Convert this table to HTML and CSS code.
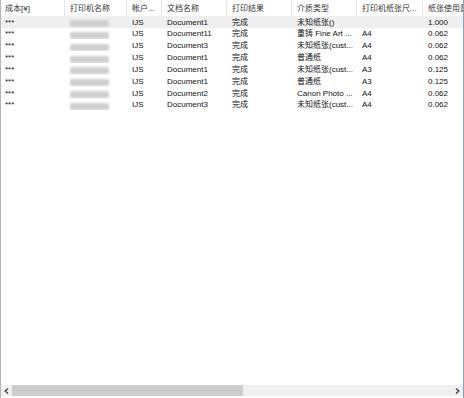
FILE: index.html
```html
<!DOCTYPE html>
<html lang="zh-CN">
<head>
<meta charset="utf-8">
<link rel="stylesheet" href="styles.css">
</head>
<body>
<div class="frame">
  <div class="table">
    <div class="row head">
      <div class="cell">成本[¥]</div>
      <div class="cell">打印机名称</div>
      <div class="cell">帐户...</div>
      <div class="cell">文档名称</div>
      <div class="cell">打印结果</div>
      <div class="cell">介质类型</div>
      <div class="cell">打印机纸张尺...</div>
      <div class="cell last">纸张使用量</div>
    </div>
    <div class="row sel">
      <div class="cell">***</div><div class="cell"><span class="blur"></span></div><div class="cell">IJS</div><div class="cell">Document1</div><div class="cell">完成</div><div class="cell">未知纸张()</div><div class="cell"></div><div class="cell">1.000</div>
    </div>
    <div class="row">
      <div class="cell">***</div><div class="cell"><span class="blur"></span></div><div class="cell">IJS</div><div class="cell">Document11</div><div class="cell">完成</div><div class="cell">重铸 Fine Art ...</div><div class="cell">A4</div><div class="cell">0.062</div>
    </div>
    <div class="row">
      <div class="cell">***</div><div class="cell"><span class="blur"></span></div><div class="cell">IJS</div><div class="cell">Document3</div><div class="cell">完成</div><div class="cell">未知纸张(cust...</div><div class="cell">A4</div><div class="cell">0.062</div>
    </div>
    <div class="row">
      <div class="cell">***</div><div class="cell"><span class="blur"></span></div><div class="cell">IJS</div><div class="cell">Document1</div><div class="cell">完成</div><div class="cell">普通纸</div><div class="cell">A4</div><div class="cell">0.062</div>
    </div>
    <div class="row">
      <div class="cell">***</div><div class="cell"><span class="blur"></span></div><div class="cell">IJS</div><div class="cell">Document1</div><div class="cell">完成</div><div class="cell">未知纸张(cust...</div><div class="cell">A3</div><div class="cell">0.125</div>
    </div>
    <div class="row">
      <div class="cell">***</div><div class="cell"><span class="blur"></span></div><div class="cell">IJS</div><div class="cell">Document1</div><div class="cell">完成</div><div class="cell">普通纸</div><div class="cell">A3</div><div class="cell">0.125</div>
    </div>
    <div class="row">
      <div class="cell">***</div><div class="cell"><span class="blur"></span></div><div class="cell">IJS</div><div class="cell">Document2</div><div class="cell">完成</div><div class="cell">Canon Photo ...</div><div class="cell">A4</div><div class="cell">0.062</div>
    </div>
    <div class="row">
      <div class="cell">***</div><div class="cell"><span class="blur"></span></div><div class="cell">IJS</div><div class="cell">Document3</div><div class="cell">完成</div><div class="cell">未知纸张(cust...</div><div class="cell">A4</div><div class="cell">0.062</div>
    </div>
  </div>
  <div class="hscroll">
    <div class="arrow">
      <svg width="5" height="6" viewBox="0 0 5 6"><path d="M4 0.5 L1.2 3 L4 5.5" fill="none" stroke="#404040" stroke-width="1.3"/></svg>
    </div>
    <div class="track"><div class="thumb"></div></div>
    <div class="arrow">
      <svg width="5" height="6" viewBox="0 0 5 6"><path d="M1 0.5 L3.8 3 L1 5.5" fill="none" stroke="#404040" stroke-width="1.3"/></svg>
    </div>
  </div>
</div>
</body>
</html>
```

FILE: styles.css
```css
* { box-sizing: border-box; }
html, body {
  margin: 0;
  padding: 0;
  background: #fff;
}
body {
  width: 464px;
  height: 398px;
  overflow: hidden;
  font-family: "Liberation Sans", "Noto Sans CJK SC", sans-serif;
  font-size: 8px;
  color: #111;
}
.frame {
  width: 464px;
  height: 398px;
  display: flex;
  flex-direction: column;
  border-left: 1px solid #b5b5b5;
  border-right: 1px solid #8aa2c0;
  overflow: hidden;
}
.table {
  flex: 1;
  display: flex;
  flex-direction: column;
}
.row {
  display: grid;
  grid-template-columns: 64px 62px 35px 65px 65px 65px 66px 60px;
  height: 11.85px;
  align-items: center;
  white-space: nowrap;
}
.row.head {
  height: 16px;
  align-items: stretch;
  color: #333;
}
.row.head .cell {
  display: flex;
  align-items: center;
  border-right: 1px solid #e4e4e4;
  padding-top: 1px;
}
.row.head .cell.last { border-right: none; }
.row.sel {
  background: #efefef;
  height: 12px;
}
.cell {
  padding-left: 5px;
  overflow: hidden;
  line-height: 11px;
}
.row .cell:first-child { padding-left: 4px; }
.blur {
  display: inline-block;
  width: 39px;
  height: 7px;
  margin-top: 2px;
  background: #cfcfcf;
  border-radius: 2px;
  filter: blur(1px);
  vertical-align: middle;
}
.hscroll {
  height: 11px;
  margin-bottom: 2px;
  display: flex;
  background: #f0f0f0;
}
.arrow {
  width: 11px;
  display: flex;
  align-items: center;
  justify-content: center;
}
.track {
  flex: 1;
  display: flex;
}
.thumb {
  width: 231px;
  background: #cdcdcd;
}
```
